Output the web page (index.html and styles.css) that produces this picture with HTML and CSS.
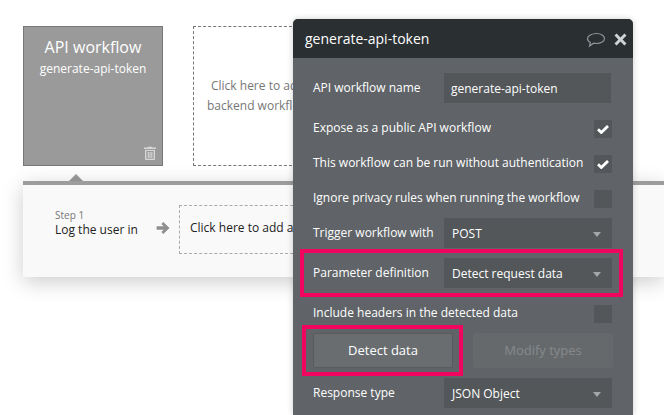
FILE: index.html
```html
<!DOCTYPE html>
<html lang="en">
<head>
<meta charset="utf-8">
<title>API workflow</title>
<link rel="stylesheet" href="styles.css">
</head>
<body>
<main class="canvas">
  <section class="cards">
    <div class="card">
      <div class="card-title">API workflow</div>
      <div class="card-name">generate-api-token</div>
      <svg class="trash" width="14" height="14" viewBox="0 0 14 14"><path d="M4.800 1.600V.7h4.400v.9H13v1.500H1V1.600zM2 4h10v9a1 1 0 0 1-1 1H3a1 1 0 0 1-1-1zm1.300 1.100v7.700h7.400V5.100zm1.400.9h1.100v6H4.700zm1.800 0h1.100v6H6.500zm1.800 0h1.100v6H8.300z" fill="#d8d8d8" fill-rule="evenodd"/></svg>
    </div>
    <div class="add-card">
      <div>Click here to add a<br>backend workflow...</div>
    </div>
  </section>
  <div class="pointer"></div>
  <section class="steps">
    <div class="step">
      <div class="step-no">Step 1</div>
      <div class="step-name">Log the user in</div>
    </div>
    <svg class="arrow" width="14" height="14" viewBox="0 0 14 14"><path d="M7.300 1 13.500 7l-6.200 6-2-2L7.700 8.800H.6V5.200h7.100L5.300 3z" fill="#8f8f8f"/></svg>
    <div class="add-step">Click here to add an action...</div>
  </section>
  <aside class="panel">
    <header class="panel-head">
      <span class="panel-title">generate-api-token</span>
      <svg class="comment" width="20" height="16" viewBox="0 0 20 16"><path d="M10.500 1.500c4.500 0 8 2.200 8 5s-3.500 5-8 5c-1 0-2-.1-2.900-.3L3.500 14l.9-3.500C2.600 9.600 1.500 8.100 1.500 6.500c0-2.800 4.500-5 9-5z" fill="none" stroke="#8b9598" stroke-width="1.200"/></svg>
      <svg class="close" width="13" height="13" viewBox="0 0 13 13"><path d="M2.600.5 6.500 4.400 10.400.5l2.100 2.100-3.900 3.900 3.900 3.900-2.100 2.100-3.900-3.900-3.900 3.900-2.100-2.100 3.900-3.900L.5 2.600z" fill="#d0d3d4"/></svg>
    </header>
    <div class="panel-body">
      <div class="row row-field">
        <label class="lbl">API workflow name</label>
        <div class="input">generate-api-token</div>
      </div>
      <div class="row row-check gap-l">
        <label class="lbl">Expose as a public API workflow</label>
        <span class="check"><svg width="12" height="10" viewBox="0 0 12 10"><path d="M1 5.200 4.300 8.500 11 2" fill="none" stroke="#fff" stroke-width="2.800"/></svg></span>
      </div>
      <div class="row row-check gap-l">
        <label class="lbl">This workflow can be run without authentication</label>
        <span class="check"><svg width="12" height="10" viewBox="0 0 12 10"><path d="M1 5.200 4.300 8.500 11 2" fill="none" stroke="#fff" stroke-width="2.800"/></svg></span>
      </div>
      <div class="row row-check gap-l">
        <label class="lbl">Ignore privacy rules when running the workflow</label>
        <span class="check"></span>
      </div>
      <div class="row row-field gap-s">
        <label class="lbl">Trigger workflow with</label>
        <div class="select"><span>POST</span><i class="caret"></i></div>
      </div>
      <div class="row row-field gap-s">
        <label class="lbl">Parameter definition</label>
        <div class="select"><span>Detect request data</span><i class="caret"></i></div>
      </div>
      <div class="row row-check gap-l">
        <label class="lbl">Include headers in the detected data</label>
        <span class="check"></span>
      </div>
      <div class="row row-buttons gap-s">
        <div class="btn">Detect data</div>
        <div class="btn btn-off">Modify types</div>
      </div>
      <div class="row row-field gap-s">
        <label class="lbl">Response type</label>
        <div class="select"><span>JSON Object</span><i class="caret"></i></div>
      </div>
    </div>
    <div class="mark mark-param"></div>
    <div class="mark mark-detect"></div>
  </aside>
</main>
</body>
</html>
```
FILE: styles.css
```css
* { box-sizing: border-box; }
html, body { margin: 0; height: 100%; }
body {
  background: #fff;
  font-family: "Open Sans", sans-serif;
  overflow: hidden;
}
.canvas {
  position: relative;
  width: 664px;
  height: 415px;
  overflow: hidden;
  padding: 26px 0 0 23px;
}
.cards { display: flex; gap: 30px; height: 140px; }
.card {
  position: relative;
  width: 140px;
  height: 140px;
  background: #9a9a9a;
  border: 1px solid #777;
  color: #fff;
  text-align: center;
  padding-top: 9px;
}
.card-title { font-size: 16px; line-height: 22px; }
.card-name { font-size: 12px; line-height: 18px; margin-top: 2px; }
.trash { position: absolute; right: 5px; bottom: 5px; }
.add-card {
  width: 200px;
  height: 140px;
  border: 1px dashed #777;
  color: #777;
  font-size: 12px;
  line-height: 20px;
  display: flex;
  align-items: center;
  padding-left: 13px;
  text-align: center;
  padding-bottom: 1px;
}
.pointer {
  width: 0;
  height: 0;
  margin: 8px 0 0 46px;
  border-left: 7.5px solid transparent;
  border-right: 7.5px solid transparent;
  border-bottom: 7px solid #9c9c9c;
}
.steps {
  display: flex;
  align-items: flex-start;
  width: 641px;
  height: 96px;
  background: #f9f9f9;
  border-top: 4px solid #9c9c9c;
  box-shadow: 0 5px 20px rgba(0, 0, 0, .2);
  padding: 20px 0 0 32px;
}
.step { width: 101px; padding-top: 4px; }
.step-no { font-size: 10px; line-height: 13px; color: #777; }
.step-name { font-size: 12px; line-height: 16px; color: #222; }
.arrow { margin: 16px 0 0 0; flex: none; }
.add-step {
  flex: none;
  width: 200px;
  height: 49px;
  margin-left: 9px;
  border: 1px dashed #aaa;
  font-size: 12px;
  line-height: 44px;
  padding-left: 10px;
  color: #222;
  white-space: nowrap;
}
.panel {
  position: absolute;
  left: 293px;
  top: 19px;
  width: 340px;
  height: 396px;
  background: #606468;
  color: #fff;
  border-radius: 5px 5px 0 0;
  box-shadow: 0 0 6px rgba(0, 0, 0, .2);
}
.panel-head {
  display: flex;
  align-items: center;
  height: 39px;
  background: #2a3032;
  border-radius: 5px 5px 0 0;
  padding: 0 6px 0 12px;
}
.panel-title { font-size: 14px; flex: 1; padding-bottom: 1px; }
.comment { margin-right: 8px; margin-top: 2px; }
.close { margin-top: 1px; }
.panel-body { padding: 15px 21px 0 20px; }
.row { display: flex; align-items: center; justify-content: space-between; }
.row-field { height: 30px; }
.row-check { height: 18px; }
.row-buttons { height: 35px; margin-right: -1px; }
.gap-l { margin-top: 17px; }
.gap-s { margin-top: 10px; }
.lbl { font-size: 12px; line-height: 18px; white-space: nowrap; }
.row-check .lbl { padding-bottom: 3px; }
.input, .select {
  width: 168px;
  height: 30px;
  background: #53575a;
  font-size: 12px;
  line-height: 30px;
  padding: 1px 7px 0 7px;
  white-space: nowrap;
}
.input { width: 167px; margin-right: 1px; }
.select { display: flex; align-items: center; justify-content: space-between; padding-left: 8px; padding-right: 11px; }
.caret {
  width: 0;
  height: 0;
  border-left: 4.5px solid transparent;
  border-right: 4.5px solid transparent;
  border-top: 5px solid #a3a7a9;
  margin-top: 1px;
}
.check {
  width: 18px;
  height: 18px;
  background: #53575a;
  display: flex;
  align-items: center;
  justify-content: center;
}
.btn {
  width: 140px;
  height: 35px;
  background: #696d70;
  border: 1px solid #585c5f;
  border-radius: 2px;
  font-size: 13px;
  line-height: 33px;
  text-align: center;
}
.btn-off {
  background: #65696c;
  border-color: #65696c;
  color: #85898c;
}
.mark {
  position: absolute;
  border: 4px solid #f0055f;
  pointer-events: none;
}
.mark-param { left: 7px; top: 230px; width: 323px; height: 48px; }
.mark-detect { left: 9px; top: 306px; width: 161px; height: 51px; }
```
